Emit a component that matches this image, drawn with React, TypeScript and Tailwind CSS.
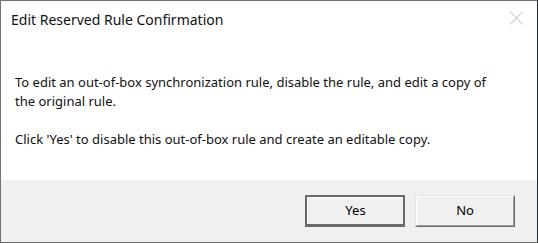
export default function App() {
  return (
    <div
      className="w-[538px] h-[243px] flex flex-col border-t border-l border-b border-r border-t-[#717171] border-l-[#737373] border-b-[#6c6c6c] border-r-[#1d2c3a] bg-white text-black"
      style={{ fontFamily: '"Noto Sans", "Liberation Sans", sans-serif' }}
    >
      <div className="flex-1 bg-white relative">
        <div className="pt-[9px] pl-[10px] text-[14px] leading-[20px] text-[#111]">
          Edit Reserved Rule Confirmation
        </div>
        {/* close glyph, greyed out */}
        <button className="absolute top-[10px] right-[13px] w-[15px] h-[14px]">
          <svg width="15" height="14" viewBox="0 0 15 14">
            <path d="M1 0.5 L14 13.5 M14 0.5 L1 13.5" stroke="#b9b9b9" strokeWidth="1" fill="none" />
          </svg>
        </button>
        <div className="pl-[14px] pr-[37px] pt-[43px] text-[13px] leading-[19px] text-[#111]">
          <p>To edit an out-of-box synchronization rule, disable the rule, and edit a copy of the original rule.</p>
          <p className="mt-[19px]">Click 'Yes' to disable this out-of-box rule and create an editable copy.</p>
        </div>
      </div>
      <div className="h-[62px] bg-[#f0f0f0] flex items-center justify-end gap-[10px] pr-[22px]">
        <button className="w-[100px] h-[32px] border-2 border-b-[3px] border-[#6a6a6a] bg-[#f0f0f0]">
          <div className="w-full h-full border-t border-l border-white flex items-center justify-center text-[13px] text-black">
            Yes
          </div>
        </button>
        <button className="w-[100px] h-[32px] border border-t-[#e3e3e3] border-l-[#e3e3e3] border-r-[#696969] border-b-[#696969] bg-[#f0f0f0]">
          <div className="w-full h-full border border-t-white border-l-white border-r-[#a0a0a0] border-b-[#a0a0a0] flex items-center justify-center text-[13px] text-black">
            No
          </div>
        </button>
      </div>
    </div>
  );
}
